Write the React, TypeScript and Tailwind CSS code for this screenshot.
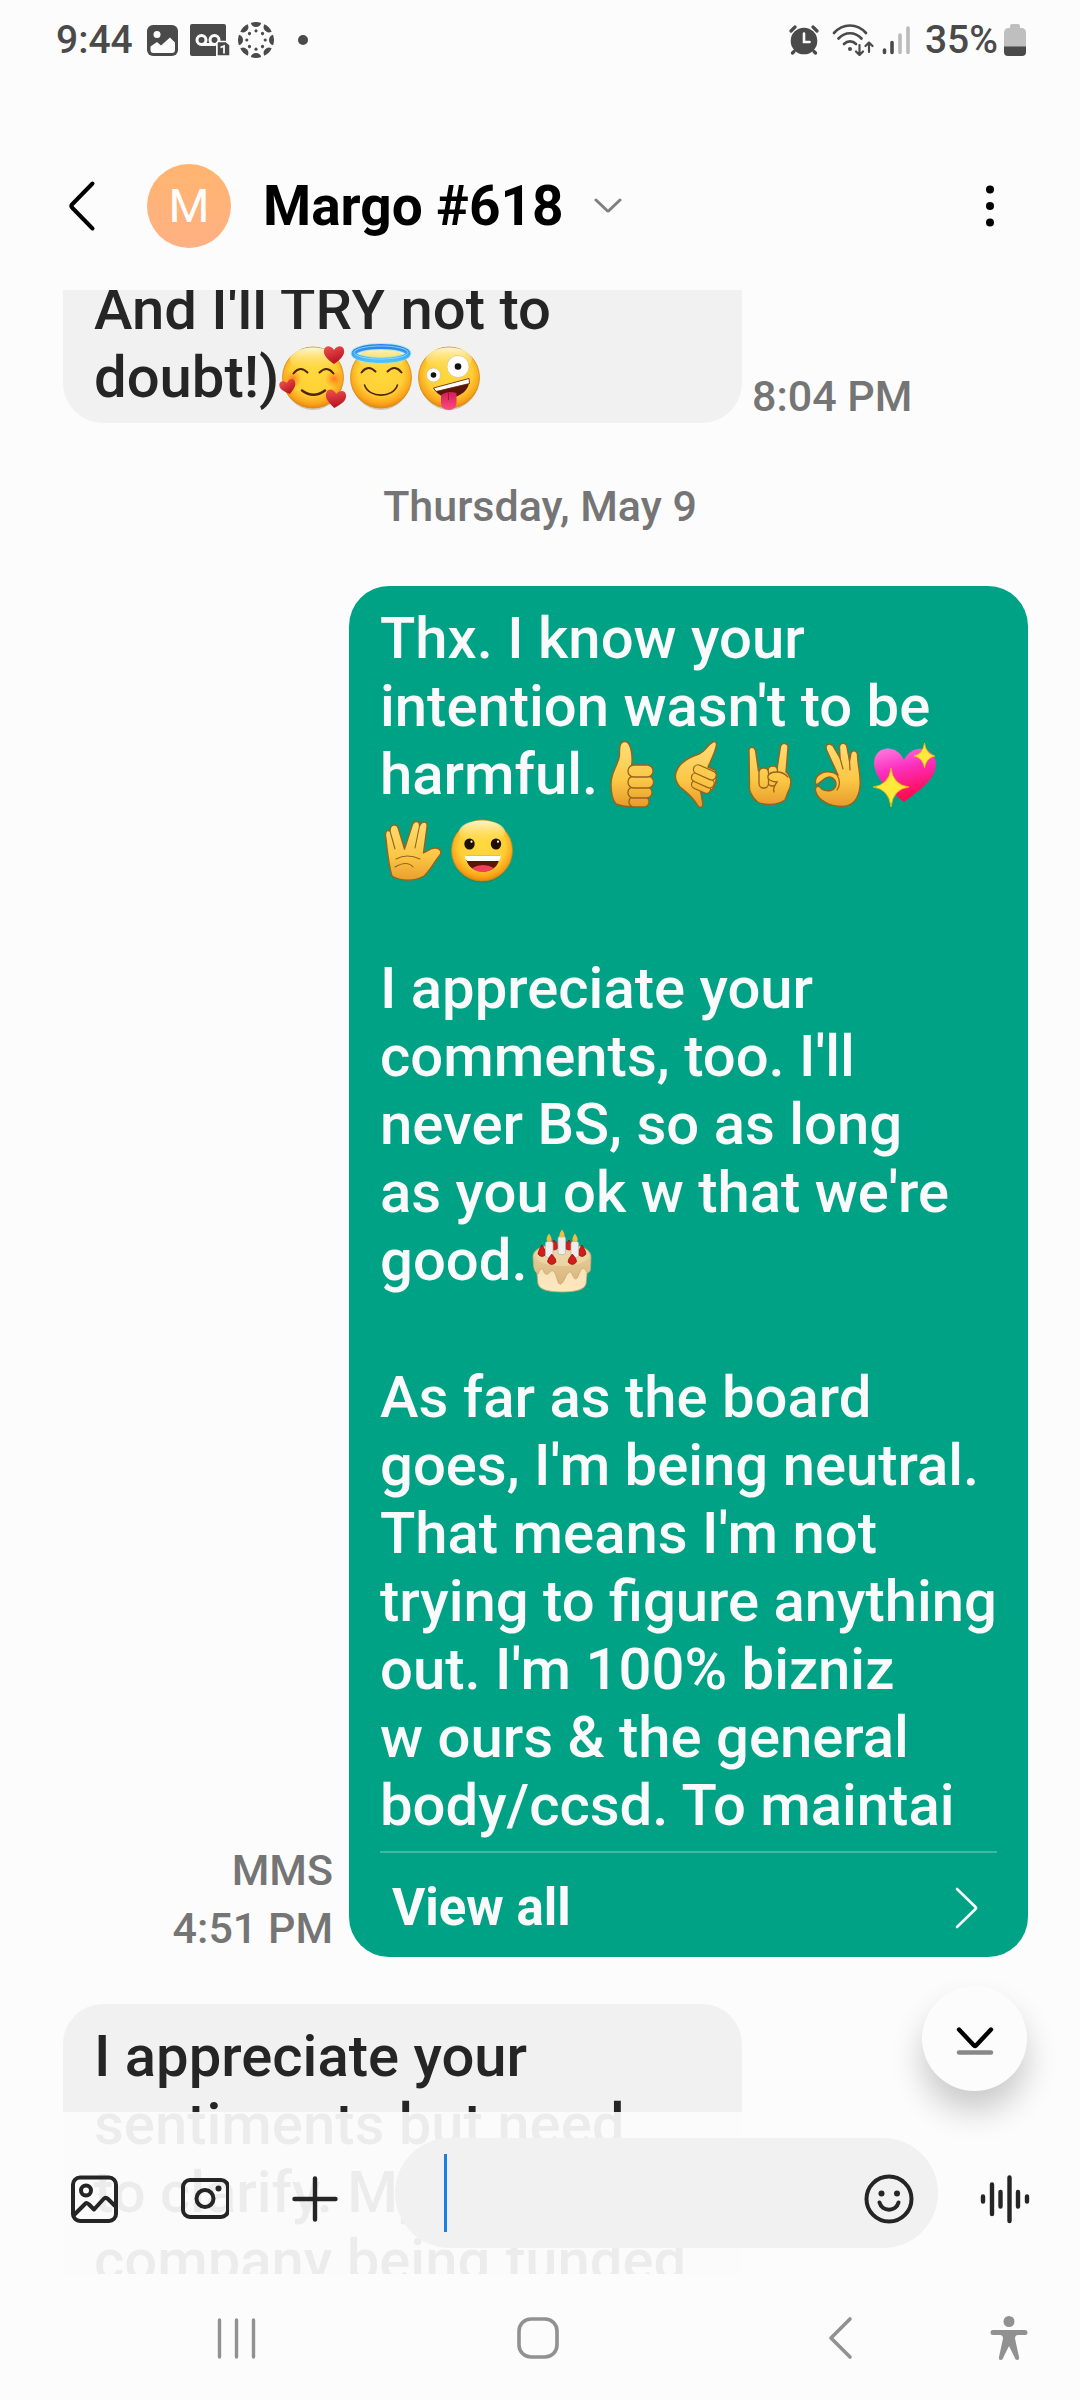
import type { ReactNode } from "react";

function Emoji({ label, className = "", children }: { label: string; className?: string; children: ReactNode }) {
  return (
    <svg role="img" aria-label={label} viewBox="0 0 68 68" className={"inline-block size-[68px] align-bottom " + className}>
      {children}
    </svg>
  );
}

function EmojiPaints() {
  return (
    <svg aria-hidden="true" width="0" height="0" className="absolute">
      <defs>
        <radialGradient id="face" cx="0.5" cy="0.42" r="0.6">
          <stop offset="0" stopColor="#ffd93c" />
          <stop offset="0.62" stopColor="#ffcf35" />
          <stop offset="0.84" stopColor="#fba61b" />
          <stop offset="1" stopColor="#e87e04" />
        </radialGradient>
        <linearGradient id="shine" x1="0" y1="0" x2="0" y2="1">
          <stop offset="0" stopColor="#fff8d8" stopOpacity="0.95" />
          <stop offset="1" stopColor="#ffe46a" stopOpacity="0" />
        </linearGradient>
        <radialGradient id="blush">
          <stop offset="0" stopColor="#ff6a1f" stopOpacity="0.85" />
          <stop offset="1" stopColor="#ff8a1f" stopOpacity="0" />
        </radialGradient>
        <linearGradient id="redheart" x1="0" y1="0" x2="0.4" y2="1">
          <stop offset="0" stopColor="#f25252" />
          <stop offset="1" stopColor="#b8141f" />
        </linearGradient>
        <linearGradient id="pinkheart" x1="0" y1="0" x2="0.3" y2="1">
          <stop offset="0" stopColor="#ff7fe0" />
          <stop offset="0.45" stopColor="#fb2fc0" />
          <stop offset="1" stopColor="#ff0a4e" />
        </linearGradient>
        <linearGradient id="skin" gradientUnits="userSpaceOnUse" x1="0" y1="0" x2="0" y2="68">
          <stop offset="0" stopColor="#ffe07c" />
          <stop offset="0.6" stopColor="#fbc644" />
          <stop offset="1" stopColor="#e6982a" />
        </linearGradient>
        <linearGradient id="halo" x1="0" y1="0" x2="0" y2="1">
          <stop offset="0" stopColor="#2f7fe6" />
          <stop offset="1" stopColor="#4cc0fb" />
        </linearGradient>
        <linearGradient id="tongue" x1="0" y1="0" x2="0" y2="1">
          <stop offset="0" stopColor="#cf1f56" />
          <stop offset="1" stopColor="#ff4a82" />
        </linearGradient>
        <linearGradient id="sponge" x1="0" y1="0" x2="0" y2="1">
          <stop offset="0" stopColor="#f6e2b8" />
          <stop offset="1" stopColor="#ffe7be" />
        </linearGradient>
        <linearGradient id="icing" x1="0" y1="0" x2="0" y2="1">
          <stop offset="0" stopColor="#ecd5a6" />
          <stop offset="1" stopColor="#d8b479" />
        </linearGradient>
      </defs>
    </svg>
  );
}

function FaceBase() {
  return (
    <>
      <ellipse cx="34" cy="37" rx="29" ry="30" fill="#7a4a00" opacity="0.25" />
      <circle cx="34" cy="34.5" r="30.5" fill="url(#face)" stroke="#c98a1a" strokeWidth="0.8" />
      <ellipse cx="34" cy="16" rx="23" ry="11.5" fill="url(#shine)" />
    </>
  );
}

function MiniHeart({ at }: { at: string }) {
  return <path transform={at} d="M0 9C-7 4-11 0-10-5C-9-10-3-10 0-5C3-10 9-10 10-5C11 0 7 4 0 9Z" fill="url(#redheart)" />;
}

function HeartsFace() {
  return (
    <Emoji label="🥰">
      <FaceBase />
      <circle cx="14" cy="36" r="9" fill="url(#blush)" />
      <circle cx="55" cy="36" r="9" fill="url(#blush)" />
      <g fill="none" stroke="#4f2608" strokeWidth="2" strokeLinecap="round">
        <path d="M14.500 30.500Q21 22 28.500 29.500M40.500 29.500Q48 22 54.500 30.500" />
        <path d="M23 47.500Q34.500 56 46 47.500" strokeWidth="2.500" />
      </g>
      <MiniHeart at="translate(55 12)" />
      <MiniHeart at="translate(9 44) rotate(-14) scale(.8)" />
      <MiniHeart at="translate(56.500 56) rotate(8)" />
    </Emoji>
  );
}

function HaloFace() {
  return (
    <Emoji label="😇">
      <FaceBase />
      <ellipse cx="34" cy="10.500" rx="27" ry="7" fill="none" stroke="#7be9f5" strokeWidth="7" opacity="0.6" />
      <ellipse cx="34" cy="10.500" rx="27" ry="7" fill="none" stroke="url(#halo)" strokeWidth="5" />
      <ellipse cx="34" cy="9.500" rx="27" ry="6.500" fill="none" stroke="#9ce1ff" strokeWidth="0.8" />
      <g fill="none" stroke="#4f2608" strokeWidth="2" strokeLinecap="round">
        <path d="M14.500 29.500Q21 21 28.500 28.500M40.500 28.500Q48 21 54.500 29.500" />
        <path d="M17.500 42C22 55.500 46 55.500 50.500 42" strokeWidth="1.600" />
      </g>
    </Emoji>
  );
}

function ZanyFace() {
  return (
    <Emoji label="🤪">
      <FaceBase />
      <circle cx="18.500" cy="32" r="7" fill="#fff" stroke="#d9c48a" strokeWidth="0.8" />
      <circle cx="43" cy="23.500" r="11" fill="#fff" stroke="#d9c48a" strokeWidth="0.8" />
      <circle cx="18.500" cy="32" r="2.800" fill="#111" />
      <circle cx="43" cy="23.500" r="3.300" fill="#111" />
      <path d="M19 46L54 36.500C55.500 50 38 58 27 53.500Q22 51 19 46Z" fill="#5c1404" />
      <path d="M18.500 45L54 35.500L54.500 40.500L21 48.500Z" fill="#fff" stroke="#5c1404" strokeWidth="0.8" />
      <path d="M26 52Q33 47 41.500 50V60Q41 67 34 67Q26 67 26 60Z" fill="url(#tongue)" />
      <path d="M33.500 50V57" stroke="#a9113f" />
    </Emoji>
  );
}

function GrinFace({ className }: { className?: string }) {
  return (
    <Emoji label="😀" className={className}>
      <FaceBase />
      <ellipse cx="21.500" cy="28" rx="5.200" ry="5.600" fill="#1d0f03" />
      <ellipse cx="48" cy="28" rx="5.200" ry="5.600" fill="#1d0f03" />
      <circle cx="23.500" cy="25.700" r="1.100" fill="#fff" />
      <circle cx="50" cy="25.700" r="1.100" fill="#fff" />
      <path d="M17.500 39.500H52Q50.500 55 35 55.500Q19 55 17.500 39.500Z" fill="#5a1503" />
      <path d="M24 52Q35 46 46 52Q41 56 35 56Q28 56 24 52Z" fill="#f2405a" />
      <path d="M17 39.500H52.500Q52.500 44.500 50.500 45H19.500Q17 44 17 39.500Z" fill="#fff" />
    </Emoji>
  );
}

const EDGE = "#96621c";

function ThumbsUp() {
  return (
    <Emoji label="👍">
      <path d="M27 1.500C21 1.500 21.500 9 21.500 15C21 24 13 31 13 44C13 54 14.500 60 18 64C25 67.500 36 67 44 67L46 26H33.500C35 18 33.500 1.500 27 1.500Z" fill="url(#skin)" stroke={EDGE} strokeWidth="1.400" />
      <g fill="url(#skin)" stroke={EDGE} strokeWidth="1.300">
        <rect x="31" y="56.500" width="20" height="10.500" rx="5" />
        <rect x="30" y="47" width="24" height="11" rx="5.300" />
        <rect x="30" y="36" width="25.500" height="12" rx="5.800" />
        <rect x="30" y="25" width="25" height="12" rx="5.800" />
      </g>
    </Emoji>
  );
}

function CallMe() {
  return (
    <Emoji label="🤙">
      <path d="M47 2C42 4 40 11 33 14C24 17 16 21 12 28C8 34 9 41 14 47C20 52 27 57 32 66C34 69 38 67 36.500 62L34 48L46 50C51 44 51 35 49 30L42 27C45 20 49 13 50.500 5C50.500 2 49 1 47 2Z" fill="url(#skin)" stroke={EDGE} strokeWidth="1.400" strokeLinejoin="round" />
      <g fill="url(#skin)" stroke={EDGE} strokeWidth="1.200">
        <rect x="25" y="43" width="20" height="8" rx="4" transform="rotate(24 35 47)" />
        <rect x="25" y="36" width="24" height="9" rx="4.500" transform="rotate(24 37 40)" />
        <rect x="27" y="28" width="24" height="9" rx="4.500" transform="rotate(24 39 32)" />
      </g>
    </Emoji>
  );
}

function Horns() {
  return (
    <Emoji label="🤘">
      <path d="M15 11C14.500 6.500 20.500 6 21.500 10.500L24.500 31L43 29L46.500 6.500C47.500 2 54.500 2.500 54 7.500L52 32C58 37 58 45 54 52L51 60C43 66 29 65 23.500 62C16 55 15 50 15.500 44Z" fill="url(#skin)" stroke={EDGE} strokeWidth="1.400" strokeLinejoin="round" />
      <g fill="url(#skin)" stroke={EDGE} strokeWidth="1.300">
        <rect x="34" y="26" width="9.500" height="20" rx="4.500" />
        <rect x="25" y="28" width="9.500" height="20" rx="4.500" />
      </g>
      <path d="M54 37C48 30 36 31 34 36C33 40 39 42 43 42C40 46 39 49 40 52" fill="url(#skin)" stroke={EDGE} strokeWidth="1.300" strokeLinecap="round" />
    </Emoji>
  );
}

function OkHand() {
  return (
    <Emoji label="👌">
      <path fillRule="evenodd" d="M14 45C12 39 15 34 23 32C29 31 33 33 36 35L25 11C22 5 27 2 31 6L38 18L37.500 7C38 2 44 2 45 7L47.500 21L49 13C51 9 56 11 55.500 16C56 28 59 35 58 46C57 57 52 66 40 66.500C28 66 16 61 13.500 51C13 47 15 45 18 47C20 50 25 52 30 50C36 47 35 39 28 37C22 37 19 43 14 45Z" fill="url(#skin)" stroke={EDGE} strokeWidth="1.400" strokeLinejoin="round" />
      <path d="M38 18L41 29M47.500 21L48 30M35 35Q40 43 35 50" fill="none" stroke={EDGE} strokeWidth="1.200" strokeLinecap="round" />
    </Emoji>
  );
}

function SparkHeart() {
  return (
    <Emoji label="💖">
      <path d="M34 62C18 49 4 38 4 22C5 6 26 3 34 20C42 3 65 6 66 24C66 39 50 50 34 62Z" fill="url(#pinkheart)" />
      <path d="M21 28Q23 45 39 47Q23 49 21 67Q19 49 3 47Q19 45 21 28Z" fill="#ffe93a" stroke="#f7b800" strokeWidth="0.8" />
      <path d="M54.500 3Q56 14 65 16Q56 18 54.500 28Q53 18 44 16Q53 14 54.500 3Z" fill="#ffe93a" stroke="#f7b800" strokeWidth="0.8" />
    </Emoji>
  );
}

function Vulcan({ className }: { className?: string }) {
  return (
    <Emoji label="🖖" className={className}>
      <path d="M12 60C9 51 8 42 6 23C4.500 17 6 13 10 15C10 8 17 7 18.500 13L24.500 33L32 10C33.500 4 40 4 39.500 10C42 4 48 5 47 11L43.500 37L52 32.500C58 31 63 34 60 39C54 46 50 55 44 60C34 66 20 65 12 60Z" fill="url(#skin)" stroke={EDGE} strokeWidth="1.400" strokeLinejoin="round" />
      <path d="M10 15L15 33M39.500 10L35 32M16 43Q27 37 40 43M15 51Q27 44 33 51" fill="none" stroke={EDGE} strokeWidth="1.100" strokeLinecap="round" />
    </Emoji>
  );
}

function Cake() {
  return (
    <Emoji label="🎂">
      <path d="M8 38L10 58Q12 66 34 66Q56 66 58 58L60 38Z" fill="url(#sponge)" stroke="#c9a56c" strokeWidth="0.8" />
      <path d="M5 31C5 22 18 18 34 18C50 18 63 22 63 31L62.500 44Q60 50 57 43Q54 40 51 48Q48 58 44 48Q42 43 38 50Q32 65 29 53Q26 41 22 46Q17 52 15 43Q12 42 10 48Q6 46 5.500 40Z" fill="url(#icing)" stroke="#c9a56c" strokeWidth="0.7" />
      <ellipse cx="34" cy="29.500" rx="27" ry="10.500" fill="#ecd5a4" />
      <g fill="#d31d1a" stroke="#8f1010" strokeWidth="0.7">
        <path d="M26 14Q31 19 30 22Q26 26 22 22Q21 19 26 14ZM41 14Q46 19 45 22Q41 26 37 22Q36 19 41 14Z" />
        <path d="M14 19Q18 25 18 28Q14 33 10 28Q10 25 14 19ZM54 19Q58 25 58 28Q54 33 50 28Q50 25 54 19Z" />
      </g>
      <g fill="#eeecec" stroke="#b9b4b4" strokeWidth="0.7">
        <rect x="17.500" y="15.500" width="7.500" height="16" rx="2" />
        <rect x="30" y="10.500" width="7.500" height="18" rx="2" />
        <rect x="43" y="15.500" width="7.500" height="16" rx="2" />
      </g>
      <path d="M23.700 28Q28.500 33 28 36Q23.700 41 19.500 36Q19.500 33 23.700 28ZM44.300 28Q49 33 48.500 36Q44.300 41 40 36Q40 33 44.300 28Z" fill="#d31d1a" stroke="#8f1010" strokeWidth="0.7" />
      <path d="M21 7.500Q25 13 23 15.500H19.500Q17 13 21 7.500ZM34 3.500Q38 9 36 11.500H32Q30 9 34 3.500ZM47 7.500Q51 13 49 15.500H45Q43 13 47 7.500Z" fill="#f3bc45" />
    </Emoji>
  );
}

function CanvasLogo() {
  const spokes = [0, 45, 90, 135, 180, 225, 270, 315];
  return (
    <svg aria-hidden="true" viewBox="0 0 36 36" className="ml-2 size-9" fill="#4a4a4a">
      {spokes.map((angle) => (
        <g key={angle} transform={`rotate(${angle} 18 18)`}>
          <path d="M12.800 1Q18 -1 23.200 1Q22 5 18 5Q14 5 12.800 1Z" />
          <circle cx="18" cy="8.800" r="1.600" />
        </g>
      ))}
    </svg>
  );
}

function StatusBar() {
  return (
    <div className="flex h-20 shrink-0 items-center pr-[54px] pl-14 text-[39px]/[48px] font-medium text-[#4a4a4a]">
      <span>9:44</span>
      <svg aria-hidden="true" viewBox="0 0 31 31" className="ml-3.5 size-[31px]">
        <rect width="31" height="31" rx="6" fill="#4a4a4a" />
        <circle cx="10" cy="9.500" r="3.500" fill="#fcfcfc" />
        <path d="M3.500 21.500L10 17L14 20.500L23 12.500L28 17.500V25Q28 28 25 28H6.500Q3.500 28 3.500 25Z" fill="#fcfcfc" />
      </svg>
      <svg aria-hidden="true" viewBox="0 0 40 33" className="ml-3 h-[33px] w-10">
        <path d="M2 0H34Q36 0 36 2V17H29Q26 17 26 20V32H2Q0 32 0 30V2Q0 0 2 0Z" fill="#4a4a4a" />
        <g fill="none" stroke="#fcfcfc" strokeWidth="3">
          <circle cx="11.500" cy="16" r="4.500" /><circle cx="24.500" cy="16" r="4.500" />
          <path d="M11.500 20.500H24" />
        </g>
        <path d="M28 17.500H36L40 21V32H27V18.500Z" fill="#4a4a4a" stroke="#fcfcfc" strokeWidth="1.500" />
        <path d="M30.500 23.500L34 22V29.500" fill="none" stroke="#fcfcfc" strokeWidth="1.800" />
      </svg>
      <CanvasLogo />
      <span className="ml-6 size-2.5 rounded-full bg-[#4a4a4a]" />
      <svg aria-hidden="true" viewBox="0 0 30 30" className="ml-auto size-[30px]" fill="#4a4a4a">
        <circle cx="15" cy="16" r="13.300" />
        <path d="M2 6L6 2M28 6L24 2M5 26.500L3.500 28M25 26.500L26.500 28" stroke="#4a4a4a" strokeWidth="3.200" strokeLinecap="round" />
        <path d="M15 8.500V17H20.500" fill="none" stroke="#fcfcfc" strokeWidth="2.600" strokeLinecap="round" />
      </svg>
      <svg aria-hidden="true" viewBox="0 0 42 32" className="ml-[13px] h-8 w-[42px]" fill="none" stroke="#4a4a4a" strokeWidth="2.700" strokeLinecap="round" strokeLinejoin="round">
        <path d="M2 9C11-1 25-1 34 9M6.500 14.500C13 7.500 23 7.500 29.500 14.500M12 20C15.500 16.500 20.500 16.500 24 20" />
        <circle cx="18" cy="25" r="2" fill="#4a4a4a" stroke="none" />
        <path d="M27.500 21V31M24 27.500L27.500 31L31 27.500M37 28V18.500M33.500 22L37 18.500L40.500 22" strokeWidth="2.200" />
      </svg>
      <svg aria-hidden="true" viewBox="0 0 28 30" className="ml-2 h-[30px] w-7" strokeWidth="3.600" strokeLinecap="round">
        <path d="M2.500 25V27.500M10 17.500V27.500" stroke="#4a4a4a" />
        <path d="M18 10V27.500M26 3V27.500" stroke="#bababa" />
      </svg>
      <span className="ml-[15px]">35%</span>
      <svg aria-hidden="true" viewBox="0 0 22 34" className="ml-1.5 h-[34px] w-[22px]">
        <path d="M6 3Q6 1 8 1H14Q16 1 16 3V5H18Q22 5.500 22 10V24H0V10Q0 5.500 4 5H6Z" fill="#bfbfbf" />
        <path d="M0 23.500H22V29Q22 33 18 33H4Q0 33 0 29Z" fill="#4a4a4a" />
      </svg>
    </div>
  );
}

function Header() {
  return (
    <header className="flex h-[210px] shrink-0 items-center pt-[42px] pr-[78px] pl-16">
      <button type="button" aria-label="Back" className="flex h-24 w-[83px] items-center">
        <svg aria-hidden="true" viewBox="0 0 36 52" className="h-[52px] w-9" fill="none" stroke="#000" strokeWidth="4" strokeLinecap="round" strokeLinejoin="round">
          <path d="M28.500 3.500L8 24.500Q6.500 26 8 27.500L28.500 48.500" />
        </svg>
      </button>
      <div className="flex size-[84px] items-center justify-center rounded-full bg-linear-to-b from-[#ffb56f] to-[#ffb083] text-[47px]/[84px] text-white">
        M
      </div>
      <h1 className="ml-8 text-[55px]/[64px] font-bold text-black">Margo #618</h1>
      <button type="button" aria-label="Contact details" className="ml-[22px] p-2">
        <svg aria-hidden="true" viewBox="0 0 28 16" className="h-4 w-7" fill="none" stroke="#808080" strokeWidth="3" strokeLinecap="round" strokeLinejoin="round">
          <path d="M2 2L13 12.500Q14 13.500 15 12.500L26 2" />
        </svg>
      </button>
      <button type="button" aria-label="More options" className="ml-auto p-2">
        <svg aria-hidden="true" viewBox="0 0 8 44" className="h-11 w-2">
          <circle cx="4" cy="5.500" r="4" /><circle cx="4" cy="22" r="4" /><circle cx="4" cy="38.500" r="4" />
        </svg>
      </button>
    </header>
  );
}

function Thread() {
  return (
    <div className="text-[58px]/[68px] font-medium text-[#252525]">
      <div className="-mt-[15px] flex items-end pl-[63px]">
        <p className="min-w-0 flex-1 rounded-b-[40px] bg-[#f1f1f1] pr-6 pb-3 pl-[31px]">
          And I'll TRY not to doubt!)
          <HeartsFace />
          <HaloFace />
          <ZanyFace />
        </p>
        <time className="w-[338px] shrink-0 pl-2.5 text-[43px]/[54px] text-[#757575]">8:04 PM</time>
      </div>

      <div className="mt-14 text-center text-[43px]/[54px] text-[#757575]">Thursday, May 9</div>

      <div className="mt-[53px] flex items-end pr-[52px]">
        <div className="w-[349px] shrink-0 pr-4 text-right text-[43px]/[58px] text-[#757575]">
          <div>MMS</div>
          <time>4:51 PM</time>
        </div>
        <div className="min-w-0 flex-1 rounded-[40px] bg-[#00a286] pt-[18px] pr-6 pl-[31px] text-[#fafafa]">
          <p>
            Thx. I know your intention wasn't to be harmful.
            <ThumbsUp />
            <CallMe />
            <Horns />
            <OkHand />
            <SparkHeart />
            <Vulcan className="mt-2 mb-0.5" />
            <GrinFace className="mt-2 mb-0.5" />
          </p>
          <p className="mt-[68px]">
            I appreciate your comments, too. I'll never BS, so as long as{"\u00a0"}you ok w that we're good.
            <Cake />
          </p>
          <p className="mt-[69px]">
            As far as the board goes, I'm being neutral. That means I'm not trying to figure anything out. I'm 100% bizniz
            w{"\u00a0"}ours &amp; the general body/ccsd. To maintai
          </p>
          <div className="mt-3 mr-[7px] border-t-2 border-[#40b9a4]">
            <button type="button" className="flex w-full items-center justify-between pt-[22px] pr-[18px] pb-4 pl-3 text-[51px]/[66px] font-bold">
              View all
              <svg aria-hidden="true" viewBox="0 0 24 42" className="h-[42px] w-6" fill="none" stroke="#fafafa" strokeWidth="2.600" strokeLinecap="round" strokeLinejoin="round">
                <path d="M2 2L20.500 20Q21.500 21 20.500 22L2 40" />
              </svg>
            </button>
          </div>
        </div>
      </div>

      <div className="mt-[47px] pr-[338px] pl-[63px]">
        <p className="rounded-[40px] bg-[#f1f1f1] py-[18px] pr-6 pl-[31px]">
          I appreciate your sentiments but need to{"\u00a0"}clarify. My company{"\u00a0"}being funded
        </p>
      </div>
    </div>
  );
}

function Composer() {
  return (
    <form className="absolute inset-x-0 bottom-0 flex h-[162px] items-center bg-[#fcfcfc]/93 pr-[42px] pl-[62px] text-[#252525]">
      <button type="button" aria-label="Gallery" className="mt-3 p-2">
        <svg aria-hidden="true" viewBox="0 0 48 48" className="size-12" fill="none" stroke="currentColor" strokeWidth="4" strokeLinejoin="round">
          <rect x="3" y="2.500" width="43" height="43.500" rx="7" />
          <circle cx="16" cy="15.500" r="5" />
          <path d="M4 40L15 29Q17 27 19 29.500L24 34.500L34 23.500Q36 22 38 24L45 31" />
        </svg>
      </button>
      <button type="button" aria-label="Camera" className="mt-3 ml-[47px] p-2">
        <svg aria-hidden="true" viewBox="0 0 48 48" className="size-12" fill="none" stroke="currentColor" strokeWidth="4">
          <rect x="2" y="5" width="45" height="37" rx="7" />
          <circle cx="24" cy="23.500" r="8.500" />
          <circle cx="37.500" cy="13.500" r="3" fill="currentColor" stroke="none" />
        </svg>
      </button>
      <button type="button" aria-label="Add" className="mt-3 ml-[46px] p-2">
        <svg aria-hidden="true" viewBox="0 0 48 48" className="size-12" fill="none" stroke="currentColor" strokeWidth="4.400" strokeLinecap="round">
          <path d="M24 3.500V44.500M3.500 24H44.500" />
        </svg>
      </button>
      <div className="ml-[48px] flex h-[110px] min-w-0 flex-1 items-center rounded-full bg-[#f1f1f1] pr-4 pl-[49px]">
        <span aria-hidden="true" className="h-[78px] w-[3px] bg-[#1a80e5]" />
        <input aria-label="Message" type="text" className="h-[78px] min-w-0 flex-1 bg-transparent text-[58px]/[68px] caret-transparent outline-none" />
        <button type="button" aria-label="Emoji" className="mt-3 p-2">
          <svg aria-hidden="true" viewBox="0 0 50 50" className="size-[50px]" fill="none" stroke="currentColor" strokeWidth="4" strokeLinecap="round">
            <circle cx="25" cy="25" r="22.500" />
            <path d="M15.500 28.500C18 38 32 38 34.500 28.500" />
            <circle cx="17.500" cy="19.500" r="3" fill="currentColor" stroke="none" />
            <circle cx="33" cy="19.500" r="3" fill="currentColor" stroke="none" />
          </svg>
        </button>
      </div>
      <button type="button" aria-label="Voice message" className="mt-3 ml-[34px] p-2">
        <svg aria-hidden="true" viewBox="0 0 50 50" className="size-[50px]" fill="none" stroke="currentColor" strokeWidth="4.400" strokeLinecap="round">
          <path d="M3 22.500V27.500M12 10.500V40M20.500 18V32.500M29.500 3.500V47M38 18V32.500M47 22.500V27.500" />
        </svg>
      </button>
    </form>
  );
}

function NavigationBar() {
  return (
    <nav className="flex h-[126px] shrink-0 items-center justify-between pt-0.5 pr-[52px] pl-[217px]">
      <button type="button" aria-label="Recent apps">
        <svg aria-hidden="true" viewBox="0 0 40 44" className="h-11 w-10" stroke="#919191" strokeWidth="3.400" strokeLinecap="round">
          <path d="M2.500 4V41M19.500 4V41M36.500 4V41" />
        </svg>
      </button>
      <button type="button" aria-label="Home" className="mr-2">
        <svg aria-hidden="true" viewBox="0 0 42 44" className="h-11 w-[42px]" fill="none" stroke="#919191" strokeWidth="3.600">
          <rect x="2" y="3" width="38" height="38" rx="12" />
        </svg>
      </button>
      <div className="flex items-center gap-[137px]">
        <button type="button" aria-label="Go back">
          <svg aria-hidden="true" viewBox="0 0 26 44" className="h-11 w-[26px]" fill="none" stroke="#919191" strokeWidth="3.600" strokeLinecap="round" strokeLinejoin="round">
            <path d="M23 3L4 22L23 41" />
          </svg>
        </button>
        <button type="button" aria-label="Accessibility">
          <svg aria-hidden="true" viewBox="0 0 38 46" className="h-[46px] w-[38px]" fill="#919191">
            <circle cx="19" cy="6.500" r="5.500" />
            <path d="M3 15H35Q37.500 15 37.500 17.500T35 20H28Q25 20 25 23.500L29 42Q29.500 45 27.500 45Q25 45 24.500 42L19 31L13.500 42Q13 45 10.500 45Q8.500 45 9 42L13 23.500Q13 20 10 20H3Q.5 20 .5 17.500T3 15Z" />
          </svg>
        </button>
      </div>
    </nav>
  );
}

export default function App() {
  return (
    <div className="flex h-screen flex-col overflow-hidden bg-[#fcfcfc] font-['Roboto',sans-serif]">
      <EmojiPaints />
      <StatusBar />
      <Header />
      <main className="relative min-h-0 flex-1 overflow-hidden">
        <Thread />
        <Composer />
        <button type="button" aria-label="Jump to latest" className="absolute right-[53px] bottom-[183px] flex size-[105px] items-center justify-center rounded-full bg-[#fcfcfc] shadow-[0_20px_32px_rgba(0,0,0,0.2)]">
          <svg aria-hidden="true" viewBox="0 0 40 32" className="mt-1 h-8 w-10" fill="none" strokeWidth="4.400" strokeLinecap="round" strokeLinejoin="round">
            <path d="M4 4.500L19 20.500Q20 21.500 21 20.500L36 4.500" stroke="#000" />
            <path d="M4 27.500H36" stroke="#888" />
          </svg>
        </button>
      </main>
      <NavigationBar />
    </div>
  );
}
